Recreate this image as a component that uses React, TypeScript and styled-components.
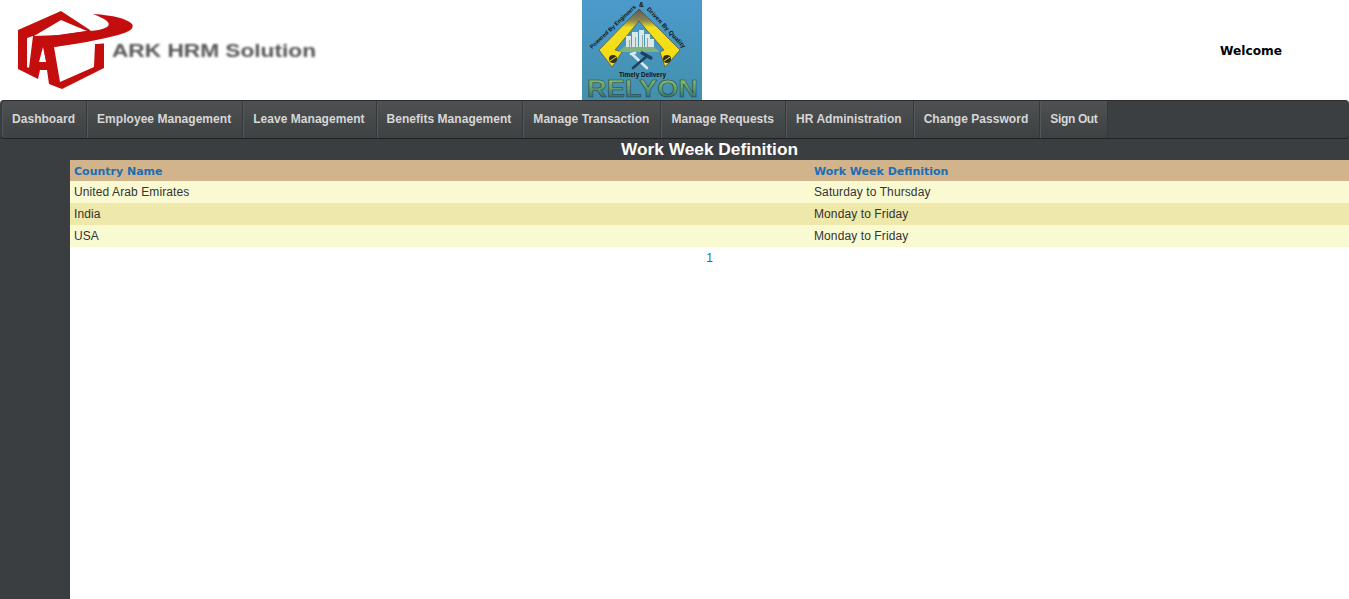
import React from "react";
import styled, { createGlobalStyle } from "styled-components";

const menuItems = [
  "Dashboard",
  "Employee Management",
  "Leave Management",
  "Benefits Management",
  "Manage Transaction",
  "Manage Requests",
  "HR Administration",
  "Change Password",
  "Sign Out",
];

const rows = [
  { country: "United Arab Emirates", week: "Saturday to Thursday" },
  { country: "India", week: "Monday to Friday" },
  { country: "USA", week: "Monday to Friday" },
];

const ArkLogo = () => (
  <svg width="340" height="100" viewBox="0 0 340 100">
    <defs>
      <filter id="soft" x="-5%" y="-5%" width="110%" height="110%">
        <feGaussianBlur stdDeviation="0.55" />
      </filter>
      <filter id="softer" x="-5%" y="-30%" width="110%" height="160%">
        <feGaussianBlur stdDeviation="0.9" />
      </filter>
    </defs>
    <g filter="url(#soft)">
      {/* body */}
      <path
        d="M61 11 L18 30 L18 69 L38 79 L40 70 L47 70 L49 84 L62 89 L104 68 L104 43 L95 44 L90 30 Z"
        fill="#c40d0f"
      />
      {/* cut-outs */}
      <path d="M61 20 L87 31 L60 35 L34 36 Z" fill="#fff" />
      <path d="M27 38 L33 36 L29 68 L27 67 Z" fill="#fff" />
      <path d="M43 47 L39 62 L46 62 Z" fill="#fff" />
      <path d="M54 47 L77 43 L100 38 L110 43 L95 44 L94 67 L60 82 Z" fill="#fff" />
      {/* swoosh */}
      <path
        d="M93 14 Q124 16 132 24 Q136 30 118 35 Q92 42 54 47 L44 37 L87 31 Q100 31 107 27 Q114 22 93 14 Z"
        fill="#c40d0f"
      />
    </g>
    <text
      x="112"
      y="57"
      fontFamily="'Liberation Sans', Arial, sans-serif"
      fontWeight="700"
      fontSize="18.5"
      textLength="204"
      lengthAdjust="spacingAndGlyphs"
      fill="#555"
      filter="url(#softer)"
    >
      ARK HRM Solution
    </text>
  </svg>
);

const RelyonLogo = () => (
  <svg width="120" height="100" viewBox="0 0 120 100">
    <defs>
      <linearGradient id="sky" x1="0" y1="0" x2="0" y2="1">
        <stop offset="0" stopColor="#4b9acb" />
        <stop offset="1" stopColor="#4390ad" />
      </linearGradient>
      <linearGradient id="chevron" x1="0" y1="0" x2="0" y2="1">
        <stop offset="0" stopColor="#5b5b56" />
        <stop offset="0.2" stopColor="#8a8650" />
        <stop offset="0.32" stopColor="#f2df1e" />
        <stop offset="1" stopColor="#f5dc14" />
      </linearGradient>
      <linearGradient id="word" x1="0" y1="0" x2="0" y2="1">
        <stop offset="0" stopColor="#9ccb62" />
        <stop offset="0.5" stopColor="#5f9f6a" />
        <stop offset="1" stopColor="#24567a" />
      </linearGradient>
      <filter id="blurLogo" x="-5%" y="-5%" width="110%" height="110%">
        <feGaussianBlur stdDeviation="0.35" />
      </filter>
    </defs>
    <rect width="120" height="100" fill="url(#sky)" />
    <g filter="url(#blurLogo)">
      <path
        d="M57 9 L17 50 L30 67 L40 52 L33 50 L57 21 L82 50 L78 52 L83 67 L98 50 Z"
        fill="url(#chevron)"
        stroke="#3f3f30"
        strokeWidth="0.6"
      />
      <path d="M36 52 L43 46 L71 46 L78 52 Z" fill="#7fb27f" />
      <g fill="#dbe6e6">
        <rect x="44" y="36" width="5" height="11" />
        <rect x="50" y="32" width="6" height="15" />
        <rect x="57" y="30" width="5" height="17" />
        <rect x="63" y="34" width="5" height="13" />
        <rect x="68" y="39" width="4" height="8" />
      </g>
      <g fill="#8fa6a6">
        <rect x="47" y="40" width="1" height="7" />
        <rect x="53" y="37" width="1" height="10" />
        <rect x="60" y="35" width="1" height="12" />
        <rect x="65" y="38" width="1" height="9" />
      </g>
      <circle cx="31" cy="59" r="4" fill="#33331f" />
      <path d="M28 61 L34 57" stroke="#f2df1e" strokeWidth="1" />
      <circle cx="85" cy="59" r="4" fill="#33331f" />
      <path d="M82 61 L88 57" stroke="#f2df1e" strokeWidth="1" />
      {/* crossed tools */}
      <g strokeLinecap="round">
        <path d="M51 55 L65 68" stroke="#dfe8ee" strokeWidth="2.6" />
        <path d="M49 54 L53 53" stroke="#dfe8ee" strokeWidth="2.6" />
        <path d="M65 56 L51 68" stroke="#22405f" strokeWidth="2.6" />
        <path d="M60 53 L69 58" stroke="#22405f" strokeWidth="3.2" />
      </g>
    </g>
    <text
      x="37"
      y="77"
      fontFamily="'Liberation Sans', sans-serif"
      fontWeight="700"
      fontSize="7"
      textLength="47"
      lengthAdjust="spacingAndGlyphs"
      fill="#111"
    >
      Timely Delivery
    </text>
    <path id="arcL" d="M10 49 L58 4" fill="none" />
    <path id="arcR" d="M64.5 9.5 L108 56" fill="none" />
    <text fontFamily="'Liberation Sans', sans-serif" fontWeight="700" fontSize="5.6" fill="#111">
      <textPath href="#arcL">Powered By Engineers</textPath>
    </text>
    <text x="57" y="7" fontFamily="'Liberation Sans', sans-serif" fontWeight="700" fontSize="6.5" fill="#111">
      &amp;
    </text>
    <text fontFamily="'Liberation Sans', sans-serif" fontWeight="700" fontSize="6" letterSpacing="0.2" fill="#111">
      <textPath href="#arcR">Driven By Quality</textPath>
    </text>
    <text
      x="5"
      y="97"
      fontFamily="'Liberation Sans', sans-serif"
      fontWeight="700"
      fontSize="24"
      textLength="111"
      lengthAdjust="spacingAndGlyphs"
      fill="url(#word)"
      stroke="#1f4150"
      strokeWidth="0.5"
    >
      RELYON
    </text>
  </svg>
);

const App = () => {
  return (
    <>
      <GlobalStyle />
      <Header>
        <LogoSlot>
          <ArkLogo />
        </LogoSlot>
        <CenterSlot>
          <RelyonLogo />
        </CenterSlot>
        <Welcome>Welcome</Welcome>
      </Header>
      <NavWrap>
        <Nav>
          {menuItems.map((item) => (
            <NavItem key={item}>{item}</NavItem>
          ))}
        </Nav>
      </NavWrap>
      <Body>
        <Sidebar />
        <Content>
          <Title>Work Week Definition</Title>
          <Table>
            <thead>
              <tr>
                <HeadCell $width={740}>Country Name</HeadCell>
                <HeadCell>Work Week Definition</HeadCell>
              </tr>
            </thead>
            <tbody>
              {rows.map((row, i) => (
                <Row key={row.country} $alt={i % 2 === 1}>
                  <Cell>{row.country}</Cell>
                  <Cell>{row.week}</Cell>
                </Row>
              ))}
            </tbody>
          </Table>
          <Pager>1</Pager>
        </Content>
      </Body>
    </>
  );
};
export default App;

const GlobalStyle = createGlobalStyle`
  html, body {
    margin: 0;
    padding: 0;
    background: #fff;
    font-family: "Liberation Sans", Arial, sans-serif;
    overflow: hidden;
  }
`;

const Header = styled.div`
  height: 100px;
  display: flex;
  background: #fff;
`;

const LogoSlot = styled.div`
  width: 582px;
  height: 100px;
`;

const CenterSlot = styled.div`
  width: 120px;
  height: 100px;
`;

const Welcome = styled.div`
  margin-left: 518px;
  line-height: 103px;
  font-size: 12.2px;
  font-weight: 700;
  font-family: "DejaVu Sans", Verdana, sans-serif;
  color: #000;
`;

const NavWrap = styled.div`
  background: linear-gradient(#fff 50%, #3a3e41 50%);
`;

const Nav = styled.div`
  height: 37px;
  display: flex;
  padding-left: 1px;
  background: #3b3f42;
  border-top: 1px solid #2b2e30;
  border-bottom: 1px solid #1f2122;
  border-radius: 4px;
`;

const NavItem = styled.div`
  padding: 0 11px 0 10px;
  line-height: 36px;
  font-size: 12px;
  font-weight: 700;
  letter-spacing: 0.04px;
  color: #d6d6d6;
  white-space: nowrap;
  background: linear-gradient(#4f5151, #3d4143);
  border-left: 1px solid #35393b;
  box-shadow: inset 1px 0 0 #55585a;
  &:first-child {
    border-radius: 4px 0 0 4px;
  }
  &:last-child {
    padding-right: 9px;
    border-right: 1px solid #35393b;
    letter-spacing: -0.35px;
  }
`;

const Body = styled.div`
  display: flex;
  height: 460px;
`;

const Sidebar = styled.div`
  width: 70px;
  background: #3a3e41;
`;

const Content = styled.div`
  flex: 1;
  background: #fff;
`;

const Title = styled.div`
  height: 21px;
  line-height: 20px;
  background: #3a3e41;
  text-align: center;
  color: #fff;
  font-size: 17.3px;
  font-weight: 700;
`;

const Table = styled.table`
  width: 100%;
  border-collapse: collapse;
  table-layout: fixed;
`;

const HeadCell = styled.th<{ $width?: number }>`
  box-sizing: border-box;
  width: ${(props) => (props.$width ? `${props.$width}px` : "auto")};
  height: 21px;
  padding: 2px 4px 0;
  background: #d2b48c;
  color: #1a6eb5;
  font-family: "DejaVu Sans", Verdana, sans-serif;
  font-size: 11px;
  font-weight: 700;
  text-align: left;
`;

const Row = styled.tr<{ $alt: boolean }>`
  background: ${(props) => (props.$alt ? "#eee8aa" : "#fafad2")};
`;

const Cell = styled.td`
  height: 22px;
  padding: 0 4px;
  font-size: 12px;
  letter-spacing: 0.1px;
  color: #333;
`;

const Pager = styled.div`
  height: 22px;
  line-height: 22px;
  text-align: center;
  font-size: 12px;
  color: #1a6eb5;
`;
